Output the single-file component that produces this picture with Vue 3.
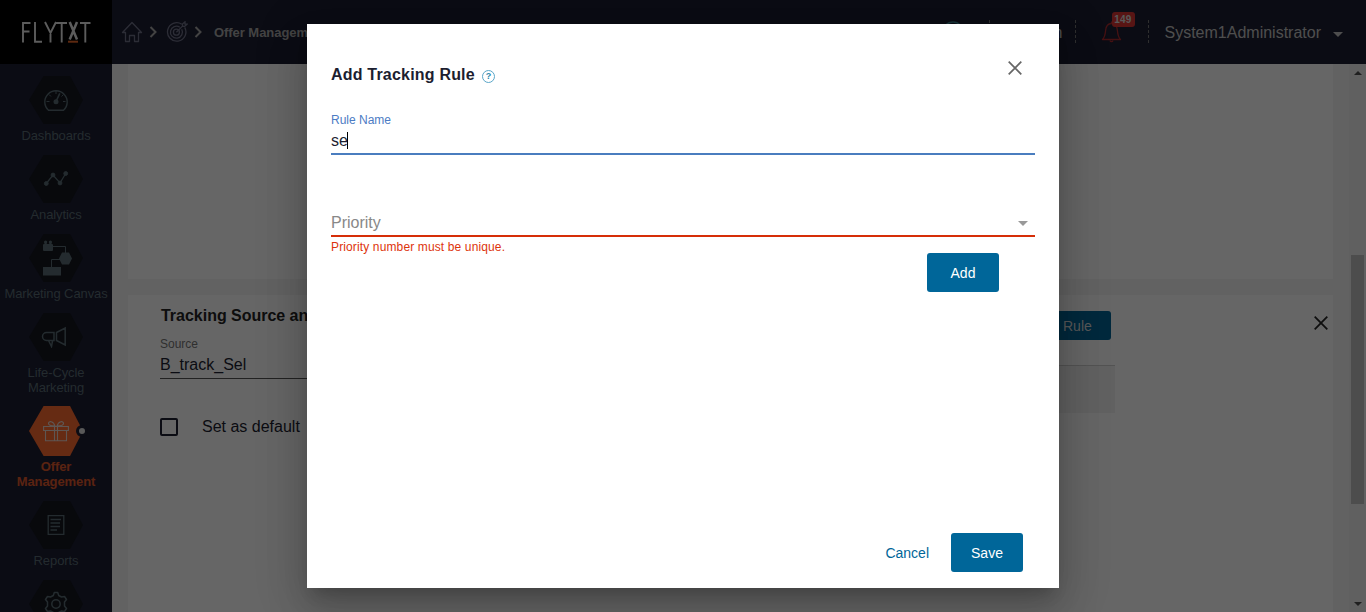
<script setup>
import { ref } from 'vue'

const nav = [
  { icon: 'gauge', lines: ['Dashboards'] },
  { icon: 'graph', lines: ['Analytics'] },
  { icon: 'canvas', lines: ['Marketing Canvas'] },
  { icon: 'horn', lines: ['Life-Cycle', 'Marketing'] },
  { icon: 'gift', lines: ['Offer', 'Management'], active: true },
  { icon: 'report', lines: ['Reports'] },
  { icon: 'gear', lines: [] },
]
const ruleName = ref('se')
</script>

<template>
  <div class="screen">
    <header class="top">
      <div class="logo">
        <svg width="72" height="26" viewBox="0 0 72 26" fill="none" stroke="#e6e6e6" stroke-width="1.9">
          <path d="M3 22.500V3H10.500M3 11.500H9.500M15 2V21.700H22M25 2L30.500 13L36 2M30.500 12.500V22.500M36.500 3H47M41.700 3V22.500M60 3H70.500M65.300 3V22.500" />
          <path d="M49.700 2L57 19.500M57 2L49.700 19.500" stroke-width="2.500" />
          <path d="M48 21.700H58" stroke="#e8662a" stroke-width="2" />
        </svg>
      </div>
      <nav class="crumbs">
        <svg class="home" width="22" height="22" viewBox="0 0 22 22" fill="none" stroke="#6f7188" stroke-width="1.300" stroke-linejoin="round">
          <path d="M1.500 11.500L11 1.500L20.500 11.500H17.500V20.500H13.500V14.500H8.500V20.500H4.500V11.500Z" />
        </svg>
        <svg class="chev" width="8" height="12" viewBox="0 0 8 12" fill="none" stroke="#a9a9a9" stroke-width="2"><path d="M1.500 1L6.500 6L1.500 11" /></svg>
        <svg class="target" width="22" height="22" viewBox="0 0 22 22" fill="none" stroke="#6f7188" stroke-width="1.300">
          <path d="M15.800 3.300A9.200 9.200 0 1 0 18.700 6.400" />
          <path d="M13.800 6.200A6 6 0 1 0 15.700 8.300" />
          <circle cx="10.400" cy="11.200" r="3" />
          <path d="M10.400 11.200L17 4.600M16.500 5.200V3L19 .800V3.200H21L18.700 5.300H16.500" />
        </svg>
        <svg class="chev" width="8" height="12" viewBox="0 0 8 12" fill="none" stroke="#a9a9a9" stroke-width="2"><path d="M1.500 1L6.500 6L1.500 11" /></svg>
        <b>Offer Management</b>
      </nav>
      <div class="tools">
        <svg class="globe" width="22" height="22" viewBox="0 0 22 22" fill="none" stroke="#3f8290" stroke-width="1.500"><circle cx="11" cy="11" r="10" /></svg>
        <i class="dash"></i>
        <span class="tenant">Admin</span>
        <i class="dash"></i>
        <div class="bell">
          <svg width="22" height="22" viewBox="0 0 22 22" fill="none" stroke="#ad2b2e" stroke-width="1.300" stroke-linejoin="round">
            <path d="M1.500 18.500C4 16 4.300 13 4.600 9.500C5 5 7.500 2.500 10.500 2.500C13.500 2.500 16 5 16.400 9.500C16.700 13 17 16 19.500 18.500Z" />
            <path d="M9 19.500C9.500 21 11.500 21 12 19.500M10.500 .500V2.500" />
          </svg>
          <span class="badge">149</span>
        </div>
        <i class="dash"></i>
        <span class="user">System1Administrator</span>
        <i class="caret"></i>
      </div>
    </header>

    <div class="body">
      <aside class="side">
        <div v-for="item in nav" :key="item.icon" class="item" :class="{ active: item.active }">
          <div class="hexwrap">
            <div class="hex">
              <svg v-if="item.icon === 'gauge'" width="26" height="24" viewBox="0 0 26 24" fill="none" stroke="currentColor" stroke-width="1.400">
                <path d="M5.500 22.300A11.200 11.200 0 1 1 20.500 22.300Z" />
                <path d="M3.500 13.500H6.500M20 13.500H22.500M6 6.500L8 8.500M13 3V6M20.500 6.500L18.500 8.500" stroke-width="1" />
                <path d="M13 13.500L16.800 5.300" stroke-width="1.600" /><circle cx="13" cy="13.700" r="2.500" fill="currentColor" stroke="none" />
              </svg>
              <svg v-else-if="item.icon === 'graph'" width="26" height="18" viewBox="0 0 26 18" fill="currentColor" stroke="currentColor">
                <path d="M3.300 13.500L10 5L17 13L22.700 3.500" fill="none" stroke-width="1.300" />
                <circle cx="3.300" cy="13.500" r="1.900" /><circle cx="10" cy="5" r="1.900" /><circle cx="17" cy="13" r="1.900" /><circle cx="22.700" cy="3.500" r="1.900" />
              </svg>
              <svg v-else-if="item.icon === 'canvas'" class="flow" width="30" height="36" viewBox="0 0 30 36" fill="currentColor">
                <rect y="4" width="10" height="7" rx="1" /><circle cx="2.600" cy="2" r="1.600" /><circle cx="7.400" cy="2" r="1.600" /><rect x="1.500" y="2" width="2.200" height="3" /><rect x="6.300" y="2" width="2.200" height="3" />
                <path d="M10 6.500H22.500V13M17 19.500H8.500V27" fill="none" stroke="currentColor" />
                <path d="M19 12.500H26L29 18.500L26 24.500H19L16 18.500Z" /><rect y="27" width="18" height="8.500" />
              </svg>
              <svg v-else-if="item.icon === 'horn'" class="horn" width="26" height="22" viewBox="0 0 26 22" fill="none" stroke="currentColor" stroke-width="1.500">
                <path d="M13 6.500V14.500H5.500A4 4 0 0 1 5.500 6.500ZM15.500 6.500L24.200 2V19L15.500 14.500ZM7.500 14.500L10.500 20.500L11.500 15" />
              </svg>
              <svg v-else-if="item.icon === 'gift'" width="26" height="22" viewBox="0 0 26 22" fill="none" stroke="currentColor" stroke-width="1.100">
                <path d="M.600 6.500H25.400V10.500H.600ZM2.500 10.500V20.800H23.500V10.500M11.500 6.500V20.800M14.500 6.500V20.800M12 6C9 6 5.500 5.500 5.500 3.500C5.500 .500 10.500 1 12 6ZM14 6C17 6 20.500 5.500 20.500 3.500C20.500 .500 15.500 1 14 6Z" />
              </svg>
              <svg v-else-if="item.icon === 'report'" width="18" height="20" viewBox="0 0 18 20" fill="none" stroke="currentColor" stroke-width="1.300">
                <path d="M1.200 .700H16.800V19.300H1.200ZM3.500 4.500H14M3.500 8H13M3.500 11.500H13M3.500 15H10" />
              </svg>
              <svg v-else class="gear" width="24" height="26" viewBox="0 0 24 26" fill="none" stroke="currentColor" stroke-width="1.500" stroke-linejoin="round">
                <path d="M10.300 1.500H13.700L14.700 4.500L17.500 6L20.500 5.500L22.500 8.500L20.500 11V15L22.500 17.500L20.500 20.500L17.500 20L14.700 21.500L13.700 24.500H10.300L9.300 21.500L6.500 20L3.500 20.500L1.500 17.500L3.500 15V11L1.500 8.500L3.500 5.500L6.500 6L9.300 4.500Z" />
                <circle cx="12" cy="13" r="4.200" />
              </svg>
            </div>
            <i v-if="item.active" class="dot"></i>
          </div>
          <div class="label"><div v-for="l in item.lines" :key="l">{{ l }}</div></div>
        </div>
      </aside>

      <main class="content">
        <section class="card first"></section>
        <section class="card second">
          <div class="left">
            <h3>Tracking Source and Rules</h3>
            <label class="src">Source</label>
            <div class="value">B_track_Sel</div>
            <div class="check"><i></i><span>Set as default</span></div>
          </div>
          <div class="right">
            <button class="btn small">Add Rule</button>
            <div class="strip"></div>
          </div>
          <svg class="x" width="14" height="14" viewBox="0 0 14 14" stroke="#242424" stroke-width="1.800"><path d="M.700 .700L13.300 13.300M13.300 .700L.700 13.300" /></svg>
        </section>
      </main>
      <div class="scroll"><i class="up"></i><div class="thumb"></div><i class="down"></i></div>
    </div>

    <div class="overlay">
      <div class="modal">
        <div class="head">
          <h2>Add Tracking Rule</h2>
          <span class="help">?</span>
          <svg class="close" width="14" height="14" viewBox="0 0 14 14" stroke="#666" stroke-width="1.700"><path d="M.700 .700L13.300 13.300M13.300 .700L.700 13.300" /></svg>
        </div>
        <label class="rule">Rule Name</label>
        <div class="input">{{ ruleName }}<i class="cursor"></i></div>
        <div class="select"><span>Priority</span><i class="caret grey"></i></div>
        <div class="error">Priority number must be unique.</div>
        <button class="btn add">Add</button>
        <footer><a>Cancel</a><button class="btn">Save</button></footer>
      </div>
    </div>
  </div>
</template>

<style>
body { margin: 0; overflow: hidden; }
</style>

<style scoped>
* { box-sizing: border-box; }
.screen { position: relative; width: 1366px; height: 612px; overflow: hidden; display: flex; flex-direction: column; font-family: "Liberation Sans", Arial, sans-serif; font-size: 16px; color: #1c1e30; background: #f5f5f5; }
.top { height: 64px; flex: none; display: flex; background: #1c1e32; }
.logo { width: 112px; background: #000; padding: 20px 0 0 20px; }
.crumbs { display: flex; align-items: center; padding-left: 9px; }
.crumbs svg { flex: none; }
.crumbs b { font-size: 13px; color: #a9a9a9; margin-left: 12px; white-space: nowrap; letter-spacing: -.05px; }
.chev { margin-left: 6px; }
.target { margin-left: 9px; }
.crumbs .target + .chev { margin-left: 6px; }
.tools { display: flex; align-items: center; margin-left: auto; padding-right: 23px; color: #c4c4c4; white-space: nowrap; }
.globe { margin-right: 25px; }
.dash { width: 1px; height: 24px; background: repeating-linear-gradient(#777 0 3px, transparent 3px 5px); }
.tenant { width: 73px; text-align: right; margin-right: 12px; padding-top: 1px; }
.bell { position: relative; width: 22px; height: 22px; margin: 0 25px 0 25px; }
.badge { position: absolute; left: 11px; top: -9px; width: 23px; height: 15px; border-radius: 3px; background: #dc3533; color: #ddd; font: bold 10px/15px "Liberation Sans", sans-serif; text-align: center; letter-spacing: .2px; }
.user { margin-left: 16px; padding-top: 1px; }
.caret { width: 0; height: 0; border: 5px solid transparent; border-top-color: #c4c4c4; border-bottom: 0; margin: 4px 0 0 12px; }
.body { flex: 1; min-height: 0; display: flex; }
.side { width: 112px; flex: none; background: #1c1e32; padding-top: 12px; overflow: hidden; }
.item { color: #5a6d75; margin-bottom: 12px; }
.hexwrap { position: relative; width: 54px; height: 48px; margin: 0 auto; }
.hex { height: 100%; background: #14171f; clip-path: polygon(27% 0, 76% 0, 100% 50%, 76% 100%, 27% 100%, 0 50%); display: flex; align-items: center; justify-content: center; }
.flow { margin-left: 4px; }
.horn { margin-right: 4px; }
.label { font-size: 13px; line-height: 15px; text-align: center; padding-top: 4px; white-space: nowrap; letter-spacing: -.1px; }
.item.active { margin-top: -1px; color: #e0592b; }
.active .hexwrap { height: 50px; }
.active .hex { background: #ff6b30; color: #ead8d0; }
.active .label { font-weight: bold; padding-top: 3px; }
.dot { position: absolute; right: -5px; top: 19px; width: 12px; height: 12px; border-radius: 50%; background: #dedede; border: 3px solid #1c1e32; }
.content { flex: 1; padding: 0 16px; display: flex; flex-direction: column; gap: 16px; }
.card { background: #fff; }
.first { height: 215px; }
.second { flex: 1; position: relative; display: flex; padding: 0 218px 0 32px; justify-content: space-between; }
.left { width: 440px; }
h3 { font-size: 16px; line-height: 20px; margin: 11px 0 0 1px; letter-spacing: -.02px; color: #242424; }
.src { display: block; font-size: 12px; line-height: 16px; color: #777; margin-top: 10px; }
.value { line-height: 20px; margin-top: 3px; height: 24px; border-bottom: 1px solid #555; }
.check { display: flex; align-items: center; margin-top: 39px; }
.check i { width: 18px; height: 18px; border: 2px solid #1c1e30; border-radius: 2px; margin: 0 24px 0 0; }
.right { width: 440px; display: flex; flex-direction: column; align-items: flex-end; padding-top: 16px; }
.strip { width: 100%; height: 48px; margin-top: 25px; background: #f2f2f2; border-top: 1px solid #d0d0d0; }
.x { position: absolute; right: 5px; top: 21px; }
.scroll { width: 17px; flex: none; background: #f1f1f1; display: flex; flex-direction: column; align-items: center; padding: 7px 0 6px; }
.up, .down { border: 4px solid transparent; }
.up { border-top: 0; border-bottom-color: #505050; }
.down { border-bottom: 0; border-top-color: #505050; margin-top: auto; }
.thumb { width: 13px; height: 249px; background: #c1c1c1; margin-top: 180px; }
.btn { width: 72px; height: 39px; border: 0; border-radius: 3px; background: #006699; color: #fff; font: 14px "Liberation Sans", Arial, sans-serif; padding: 0; }
.btn.small { width: 96px; height: 29px; padding: 0; margin-right: 4px; flex: none; color: #ddd; }
.overlay { position: absolute; inset: 0; background: rgba(0, 0, 0, .6); padding: 24px 307px; }
.modal { height: 564px; background: #fff; padding: 0 24px 16px; display: flex; flex-direction: column; box-shadow: 0 11px 15px -7px rgba(0,0,0,.2), 0 24px 38px 3px rgba(0,0,0,.14), 0 9px 46px 8px rgba(0,0,0,.12); }
.head { display: flex; height: 64px; padding-top: 37px; }
h2 { margin: 4px 0 0; font-size: 16px; line-height: 20px; letter-spacing: .2px; }
.help { width: 13px; height: 13px; border: 1px solid #5aa6c8; border-radius: 50%; color: #2a87ad; font: bold 9px/11px "Liberation Sans", sans-serif; text-align: center; margin: 9px 0 0 7px; }
.close { margin: 0 13px 0 auto; }
.rule { font-size: 12px; line-height: 16px; color: #4c7cc4; margin-top: 24px; }
.input { height: 27px; line-height: 20px; padding-top: 3px; border-bottom: 2px solid #4a7dbf; display: flex; }
.cursor { width: 1px; height: 17px; background: #000; margin-top: 1px; margin-left: -1px; }
.select { height: 27px; line-height: 20px; margin-top: 55px; padding: 3px 7px 0 0; display: flex; justify-content: space-between; color: #888; border-bottom: 2px solid #d62e08; }
.caret.grey { border-top-color: #999; margin-top: 8px; }
.error { font-size: 12px; line-height: 16px; margin-top: 2px; letter-spacing: .13px; color: #dd330c; }
.add { align-self: flex-end; margin: -2px 36px 0 0; flex: none; }
footer { margin-top: auto; display: flex; justify-content: flex-end; align-items: center; gap: 22px; padding-right: 12px; font-size: 14px; color: #006699; }
</style>
